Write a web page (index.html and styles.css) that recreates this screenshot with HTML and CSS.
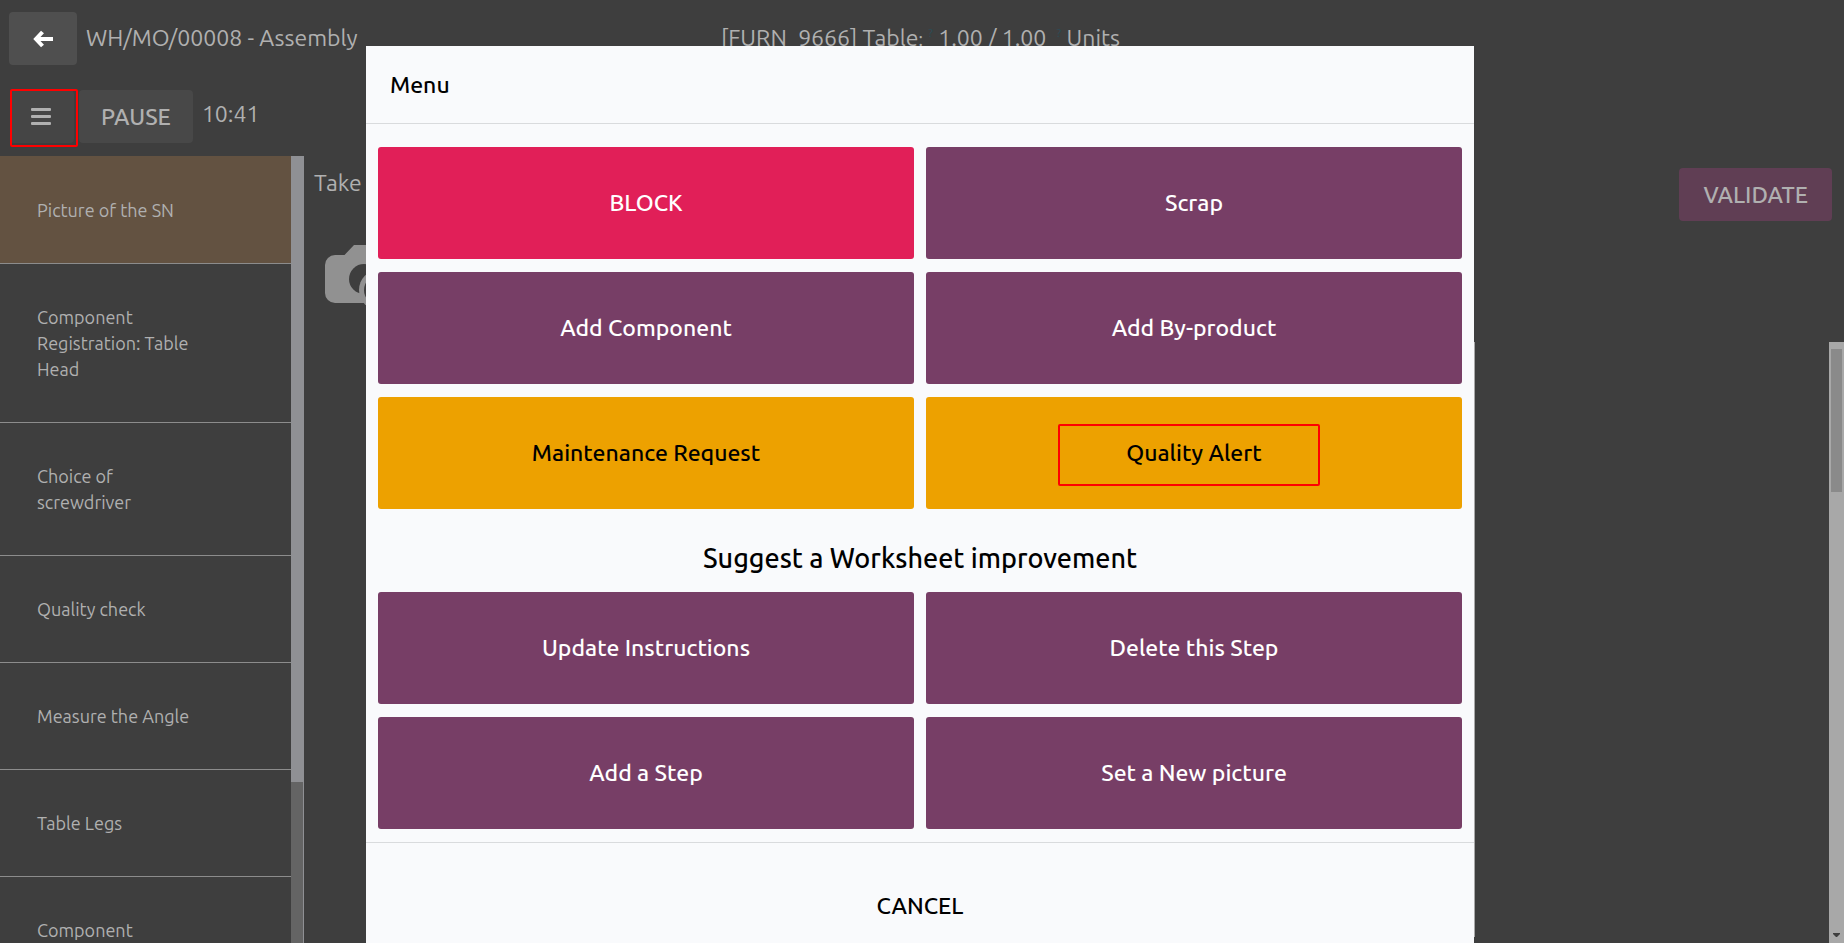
FILE: index.html
```html
<!DOCTYPE html>
<html lang="en">
<head>
<meta charset="utf-8">
<title>WH/MO/00008 - Assembly</title>
<link rel="stylesheet" href="styles.css">
</head>
<body>
<div class="app">
  <header class="topbar">
    <div class="topbar-left">
      <button class="btn btn-back" aria-label="Back">
        <svg width="20" height="18" viewBox="0 0 20 18" fill="none" stroke="currentColor" stroke-width="4"><path d="M9.500 2L3 9l6.500 7M3 9h17"/></svg>
      </button>
      <span>WH/MO/00008 - Assembly</span>
    </div>
    <div class="product">[FURN_9666] Table<small>:</small> <sup>?</sup> <span class="qty">1.00 / 1.00</span> <sup class="unit-help">?</sup> Units</div>
    <div></div>
  </header>
  <div class="toolbar">
    <button class="btn btn-menu" aria-label="Menu">
      <svg width="20" height="17" viewBox="0 0 20 17" fill="currentColor"><rect width="20" height="3" rx="1"/><rect y="7" width="20" height="3" rx="1"/><rect y="14" width="20" height="3" rx="1"/></svg>
    </button>
    <button class="btn">PAUSE</button>
    <span class="timer">10:41</span>
  </div>
  <div class="main">
    <nav class="sidebar">
      <ul class="steps">
        <li class="step active">Picture of the SN</li>
        <li class="step">Component Registration: Table Head</li>
        <li class="step">Choice of screwdriver</li>
        <li class="step">Quality check</li>
        <li class="step">Measure the Angle</li>
        <li class="step">Table Legs</li>
        <li class="step">Component</li>
      </ul>
      <div class="side-scroll"><div class="side-thumb"></div></div>
    </nav>
    <section class="content">
      <div class="instruction">
        <div class="picture">
          <span>Take</span>
          <svg class="camera" width="78" height="66" viewBox="0 0 78 66">
            <path fill="#919191" d="M10 10h9.500L29 0h21l9 10h9a10 10 0 0 1 10 10v28a10 10 0 0 1-10 10H10A10 10 0 0 1 0 48V20a10 10 0 0 1 10-10z"/>
            <circle cx="39" cy="34" r="15" fill="#3e3e3e"/>
            <circle cx="54" cy="45" r="20" fill="#919191"/>
            <circle cx="54" cy="45" r="15" fill="#3e3e3e"/>
          </svg>
        </div>
        <button class="btn btn-validate">VALIDATE</button>
      </div>
      <div class="worksheet">
        <div class="doc-page"></div>
        <div class="doc-scroll">
          <div class="doc-thumb"></div>
          <svg width="7" height="4" viewBox="0 0 7 4"><path d="M0 0h7v1L4 4H3L0 1z" fill="#3e3e3e"/></svg>
        </div>
      </div>
    </section>
  </div>
</div>

<div class="overlay">
  <div class="modal" role="dialog" aria-labelledby="menu-title">
    <h4 class="modal-title" id="menu-title">Menu</h4>
    <div class="modal-body">
      <div class="actions">
        <button class="action danger">BLOCK</button>
        <button class="action">Scrap</button>
        <button class="action">Add Component</button>
        <button class="action">Add By-product</button>
        <button class="action warning">Maintenance Request</button>
        <button class="action warning marked">Quality Alert</button>
      </div>
      <h3 class="subtitle">Suggest a Worksheet improvement</h3>
      <div class="actions">
        <button class="action">Update Instructions</button>
        <button class="action">Delete this Step</button>
        <button class="action">Add a Step</button>
        <button class="action">Set a New picture</button>
      </div>
    </div>
    <footer class="modal-footer"><button class="cancel">CANCEL</button></footer>
  </div>
</div>
</body>
</html>
```
FILE: styles.css
```css
*, *::after { box-sizing: border-box; }

body {
  margin: 0;
  height: 100vh;
  overflow: hidden;
  background: #3e3e3e;
  color: #b0b0b0;
  font-family: Ubuntu, "Noto Sans", sans-serif;
  font-size: 23px;
  line-height: 32px;
}

button {
  border: 0;
  font: inherit;
  font-weight: 500;
}

.app {
  display: flex;
  flex-direction: column;
  height: 100vh;
}

.topbar {
  display: grid;
  grid-template-columns: 1fr auto 1fr;
  align-items: center;
  padding: 12px 12px 0 9px;
  white-space: nowrap;
}

.topbar-left {
  display: flex;
  align-items: center;
  gap: 9px;
}

.topbar-left span { padding-bottom: 2px; }

.product small { font-size: 18px; }
.product sup {
  color: #2b4c57;
  font-size: 12px;
  line-height: 12px;
}

.product .unit-help { margin-left: 5px; }

.btn {
  display: flex;
  align-items: center;
  justify-content: center;
  height: 53px;
  padding: 0 22px;
  border-radius: 4px;
  background: #484848;
  color: #b0b0b0;
}

.btn svg { flex: none; }

.btn-back {
  width: 68px;
  background: #4f4f4f;
  color: #fff;
}

.toolbar {
  display: flex;
  align-items: center;
  gap: 5px;
  padding: 25px 12px 13px 10px;
}

.btn-menu {
  position: relative;
  width: 64px;
  padding: 0 23px 0 21px;
  background: #454545;
}

.btn-menu::after {
  content: "";
  position: absolute;
  inset: -1px -4px -4px 0;
  border: 2px solid #f00;
  border-radius: 2px;
}

.timer {
  padding: 0 0 5px 4px;
}

.main {
  flex: 1;
  display: flex;
  min-height: 0;
}

.sidebar {
  flex: 0 0 304px;
  display: flex;
  overflow: hidden;
}

.steps {
  flex: 1;
  margin: 0;
  padding: 0;
  border-top: 1px solid #635241;
  list-style: none;
}

.step {
  padding: 40px 90px 40px 37px;
  border-bottom: 1px solid #8c8c8c;
  font-size: 18px;
  line-height: 26px;
}

.step.active { background: #635241; }

.side-scroll {
  width: 13px;
  background: #646464;
  border-right: 1px solid #8f9094;
}

.side-thumb {
  height: calc(80% - 4px);
  background: #8f9094;
}

.content {
  flex: 1;
  display: flex;
  flex-direction: column;
}

.instruction {
  flex: 0 0 186px;
  display: flex;
  justify-content: space-between;
  align-items: flex-start;
  padding: 12px 12px 0 10px;
}

.picture {
  display: flex;
  flex-direction: column;
  gap: 47px;
}

.camera { margin-left: 11px; }

.picture span { line-height: 30px; }

.btn-validate {
  padding: 0 24px;
  background: #603e54;
}

.worksheet {
  flex: 1;
  display: flex;
  justify-content: flex-end;
}

.doc-page {
  width: 355px;
  margin-bottom: 6px;
  border-left: 1px solid #a8a8a8;
}

.doc-scroll {
  display: flex;
  flex-direction: column;
  align-items: center;
  justify-content: space-between;
  width: 15px;
  padding: 7px 2px 6px;
  background: #a8a8a8;
}

.doc-thumb {
  width: 11px;
  height: 143px;
  background: #8a8a8a;
}

.overlay {
  position: fixed;
  inset: 0;
  display: flex;
  justify-content: center;
  padding: 46px 4px 0 0;
}

.modal {
  flex: 0 1 1108px;
  display: flex;
  flex-direction: column;
  background: #f9fafc;
  color: #000;
}

.modal-title {
  margin: 0;
  padding: 23px 24px 22px;
  border-bottom: 1px solid #d9dbdd;
  font-size: 23px;
  font-weight: 500;
}

.modal-body { padding: 23px 12px 13px; }

.actions {
  display: grid;
  grid-template-columns: 1fr 1fr;
  gap: 13px 12px;
}

.action {
  height: 112px;
  border-radius: 3px;
  background: #773e66;
  color: #fff;
}

.action.danger { background: #e11f58; }

.action.warning {
  background: #eda100;
  color: #000;
}

.marked { position: relative; }

.marked::after {
  content: "";
  position: absolute;
  top: 27px;
  left: 132px;
  width: 262px;
  height: 62px;
  border: 2px solid #f00;
  border-radius: 2px;
}

.subtitle {
  margin: 0;
  padding: 32px 0 17px;
  font-size: 27px;
  font-weight: 500;
  line-height: 34px;
  text-align: center;
}

.modal-footer {
  flex: 1;
  display: flex;
  justify-content: center;
  align-items: flex-start;
  padding-top: 47px;
  border-top: 1px solid #d9dbdd;
}

.cancel {
  padding: 0;
  background: none;
  color: #000;
}
```
